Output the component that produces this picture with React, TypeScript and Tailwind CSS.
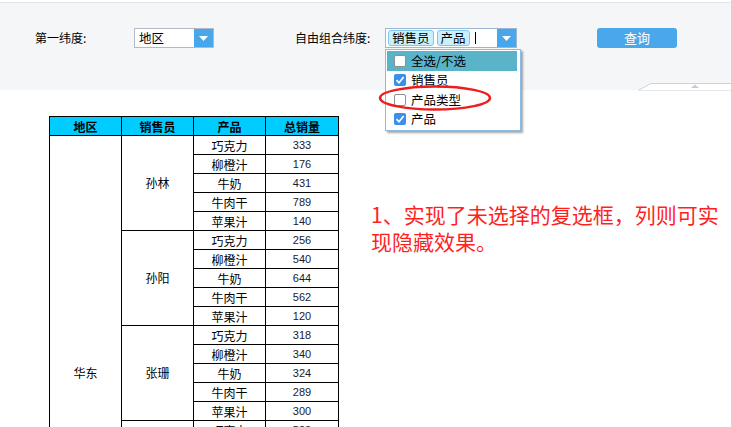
import React from "react";

const groups: { name: string; rows: [string, string][] }[] = [
  { name: "孙林", rows: [["巧克力", "333"], ["柳橙汁", "176"], ["牛奶", "431"], ["牛肉干", "789"], ["苹果汁", "140"]] },
  { name: "孙阳", rows: [["巧克力", "256"], ["柳橙汁", "540"], ["牛奶", "644"], ["牛肉干", "562"], ["苹果汁", "120"]] },
  { name: "张珊", rows: [["巧克力", "318"], ["柳橙汁", "340"], ["牛奶", "324"], ["牛肉干", "289"], ["苹果汁", "300"]] },
  { name: "王伟", rows: [["巧克力", "523"], ["柳橙汁", "410"], ["牛奶", "275"], ["牛肉干", "366"], ["苹果汁", "198"]] },
  { name: "李娜", rows: [["巧克力", "402"], ["柳橙汁", "233"], ["牛奶", "517"], ["牛肉干", "148"], ["苹果汁", "265"]] },
];

function Arrow() {
  return (
    <div className="w-[19px] h-full bg-[#48a6ea] flex items-center justify-center">
      <svg width="9" height="5" viewBox="0 0 9 5">
        <polygon points="0,0 9,0 4.5,5" fill="#ffffff" />
      </svg>
    </div>
  );
}

function Check({ checked }: { checked: boolean }) {
  if (checked)
    return (
      <div className="w-[12px] h-[12px] rounded-[2px] bg-[#3b8ee9] flex items-center justify-center">
        <svg width="10" height="10" viewBox="0 0 10 10">
          <path d="M1.5 5.2 L4 7.8 L8.6 2" stroke="#fff" strokeWidth="1.7" fill="none" />
        </svg>
      </div>
    );
  return <div className="w-[12px] h-[12px] rounded-[2px] bg-white border border-[#8f8f8f]" />;
}

export default function App() {
  return (
    <div className="w-[731px] h-[427px] overflow-hidden bg-white font-['Noto_Sans_CJK_SC',sans-serif] text-black">
      <div className="mt-[2px] h-[88px] border-t border-[#e3e5ea] bg-[#f5f6f8] relative">
        <div className="flex items-center pt-[25px] pl-[35px] text-[12px] leading-[20px]">
          <div className="w-[99px]">第一纬度:</div>
          <div className="w-[80px] h-[20px] bg-white border border-[#b4b9c8] flex">
            <div className="flex-1 pl-[4px] text-[12.5px] leading-[18px]">地区</div>
            <Arrow />
          </div>
          <div className="ml-[81px] w-[90px]">自由组合纬度:</div>
          <div className="relative w-[132px] h-[20px] bg-white border border-[#9fb5d4] flex">
            <div className="flex-1 flex items-center pl-[2px] gap-[3px]">
              <span className="h-[16px] px-[3px] rounded-[3px] bg-[#c8f0fd] border border-[#7ec6ee] text-[12.5px] leading-[14px]">销售员</span>
              <span className="h-[16px] px-[3px] rounded-[3px] bg-[#c8f0fd] border border-[#7ec6ee] text-[12.5px] leading-[14px]">产品</span>
              <span className="ml-[2px] w-[1px] h-[12px] bg-black" />
            </div>
            <Arrow />
            <div className="absolute left-[-1px] top-[20px] w-[136px] bg-white border border-[#8cbbe6] shadow-[2px_2px_2px_rgba(0,0,0,0.35)] p-[1px] z-10">
              {[
                ["全选/不选", false, true],
                ["销售员", true, false],
                ["产品类型", false, false],
                ["产品", true, false],
              ].map(([t, c, h]) => (
                <div
                  key={t as string}
                  className={`h-[19.5px] flex items-center pl-[7px] gap-[5px] mr-[2px] ${h ? "bg-[#5ab4c9]" : ""}`}
                >
                  <Check checked={c as boolean} />
                  <span className="text-[12.5px] leading-[16px]">{t as string}</span>
                </div>
              ))}
            </div>
            <svg className="absolute left-[-8px] top-[56px] z-20" width="114" height="26" viewBox="0 0 114 26">
              <ellipse cx="57" cy="13" rx="55" ry="11.5" fill="none" stroke="#ee1c1c" strokeWidth="2.4" />
            </svg>
          </div>
          <button className="ml-[80px] w-[80px] h-[20px] rounded-[3px] bg-[#4aa8ea] text-white text-[13px] leading-[20px]">
            查询
          </button>
        </div>
        <svg className="absolute right-0 bottom-[-1px]" width="93" height="9" viewBox="0 0 93 9">
          <polygon points="0,8.5 13,1.5 93,1.5 93,8.5" fill="#ffffff" />
          <polyline points="0,8.5 13,1.5 93,1.5" fill="none" stroke="#cfd2d6" strokeWidth="1" />
          <line x1="0" y1="8.5" x2="93" y2="8.5" stroke="#e6e8eb" strokeWidth="1" />
          <polygon points="53,6 57,2.5 61,6" fill="#c9cbcf" />
        </svg>
      </div>
      <div className="flex items-start">
        <table className="ml-[49px] mt-[26px] border-collapse table-fixed w-[289px] text-[12px]">
          <colgroup>
            <col className="w-[72px]" />
            <col className="w-[72px]" />
            <col className="w-[72px]" />
            <col className="w-[73px]" />
          </colgroup>
          <thead>
            <tr className="h-[19px] bg-[#00ccff]">
              {["地区", "销售员", "产品", "总销量"].map((h) => (
                <th key={h} className="border border-black p-0 font-bold leading-[17px] text-center">
                  {h}
                </th>
              ))}
            </tr>
          </thead>
          <tbody>
            {groups.map((g, gi) =>
              g.rows.map(([p, v], ri) => (
                <tr key={`${gi}-${ri}`} className="h-[19px]">
                  {gi === 0 && ri === 0 && (
                    <td rowSpan={25} className="border border-black p-0 text-center align-middle">
                      华东
                    </td>
                  )}
                  {ri === 0 && (
                    <td rowSpan={5} className="border border-black p-0 text-center align-middle">
                      {g.name}
                    </td>
                  )}
                  <td className="border border-black p-0 text-center leading-[17px]">{p}</td>
                  <td className="border border-black p-0 text-center leading-[17px] font-['Liberation_Sans',sans-serif] text-[11px] text-[#1a1a2a]">
                    {v}
                  </td>
                </tr>
              ))
            )}
          </tbody>
        </table>
        <div className="ml-[32px] mt-[111px] text-[21px] leading-[27px] text-[#ff1f1f] whitespace-nowrap">
          1、实现了未选择的复选框，列则可实
          <br />
          现隐藏效果。
        </div>
      </div>
    </div>
  );
}
